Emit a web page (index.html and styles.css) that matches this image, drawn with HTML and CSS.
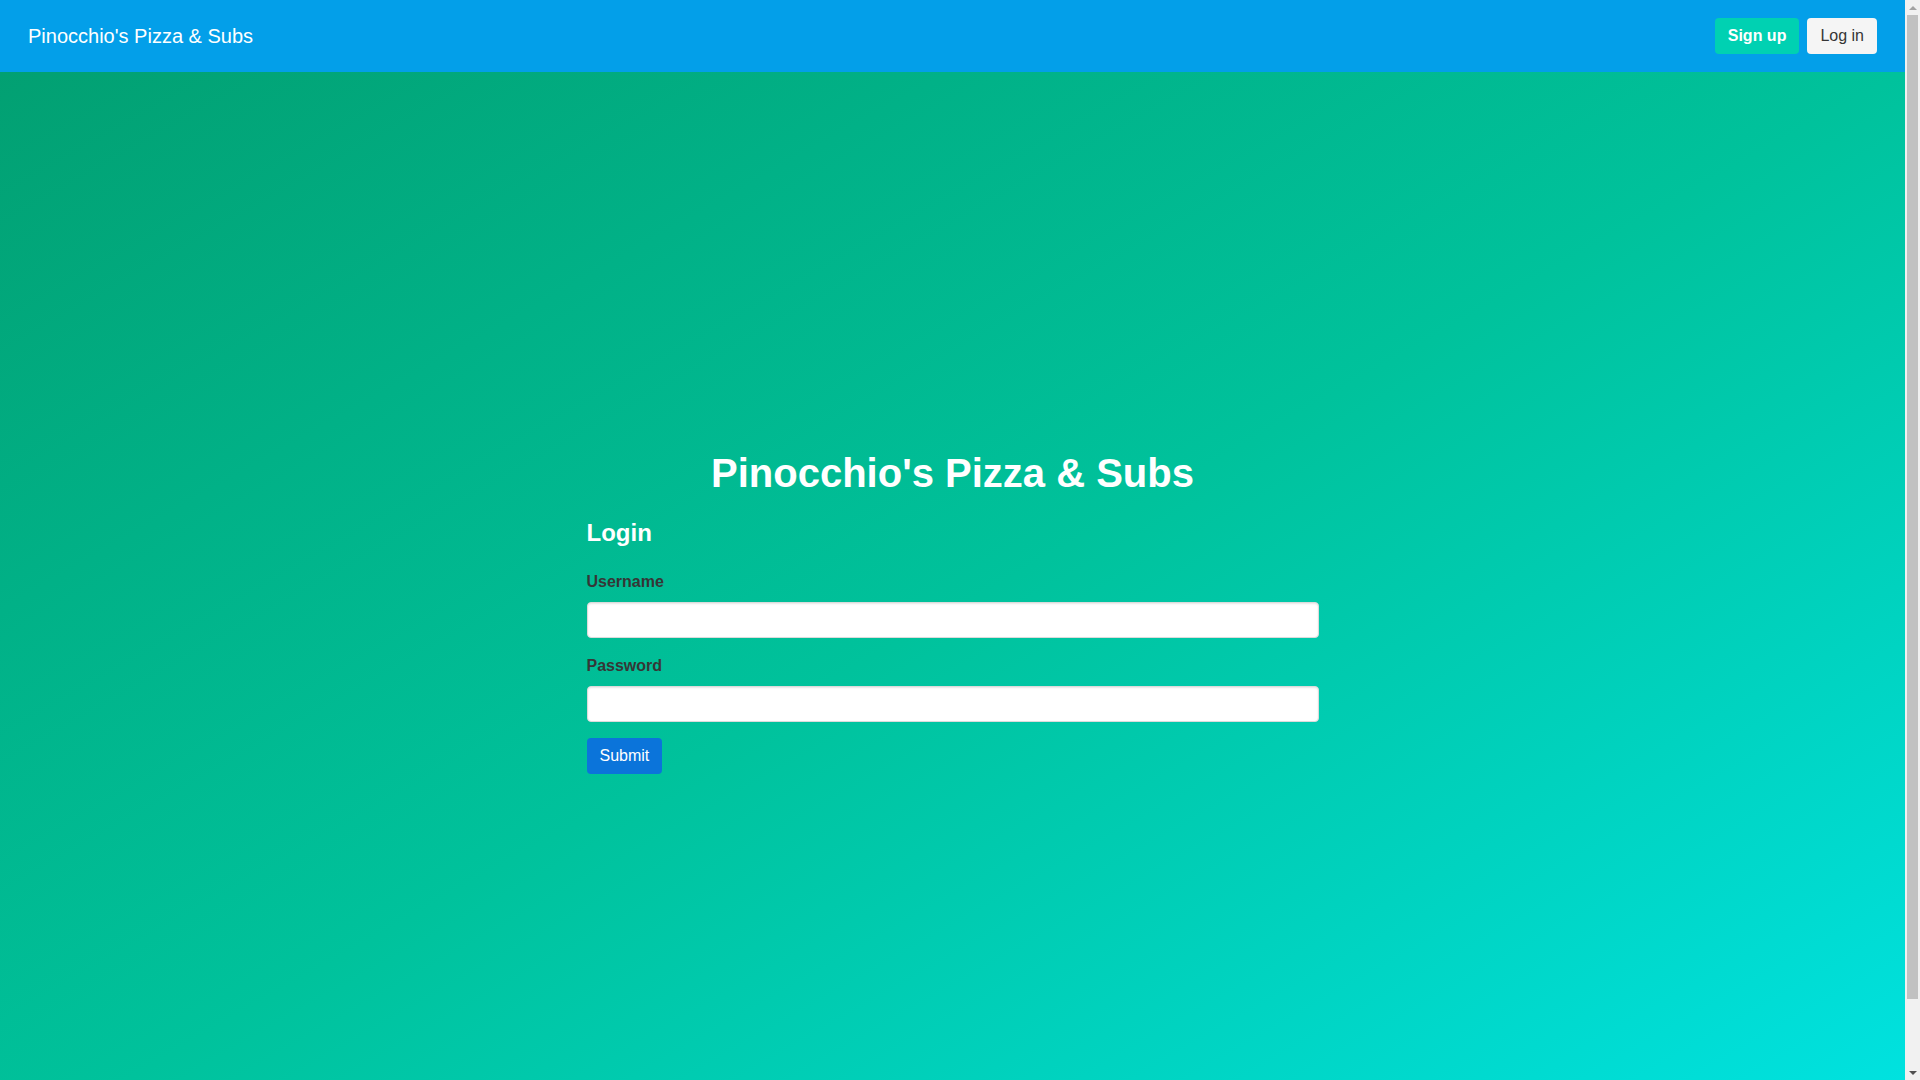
FILE: index.html
```html
<!DOCTYPE html>
<html lang="en">
<head>
<meta charset="utf-8">
<title>Pinocchio's Pizza &amp; Subs</title>
<link rel="stylesheet" href="styles.css">
</head>
<body>
<nav class="navbar">
  <a class="brand" href="#">Pinocchio's Pizza &amp; Subs</a>
  <div class="nav-buttons">
    <a class="btn btn-primary" href="#">Sign up</a>
    <a class="btn btn-light" href="#">Log in</a>
  </div>
</nav>
<section class="hero">
  <div class="hero-body">
    <h1 class="title">Pinocchio's Pizza &amp; Subs</h1>
    <form class="login-form">
      <h2 class="subtitle">Login</h2>
      <div class="field">
        <label class="label" for="username">Username</label>
        <input class="input" id="username" type="text">
      </div>
      <div class="field">
        <label class="label" for="password">Password</label>
        <input class="input" id="password" type="password">
      </div>
      <button class="btn btn-link" type="submit">Submit</button>
    </form>
  </div>
</section>
<div class="scrollbar" aria-hidden="true">
  <div class="sb-arrow sb-up"></div>
  <div class="sb-thumb"></div>
  <div class="sb-track"></div>
  <div class="sb-arrow sb-down"></div>
</div>
</body>
</html>
```
FILE: styles.css
```css
* { box-sizing: border-box; }

html, body {
  margin: 0;
  padding: 0;
}

html {
  scrollbar-width: none;
}

body {
  font-family: "Liberation Sans", Arial, sans-serif;
  font-size: 16px;
  color: #363636;
  padding-right: 15px;
}

.navbar {
  height: 72px;
  background: #039fe9;
  display: flex;
  align-items: center;
  justify-content: space-between;
  padding: 0 28px;
}

.brand {
  color: #ffffff;
  font-size: 20px;
  text-decoration: none;
}

.nav-buttons {
  display: flex;
  gap: 8px;
}

.btn {
  display: inline-block;
  font-family: "Liberation Sans", Arial, sans-serif;
  font-size: 16px;
  line-height: 20px;
  padding: 7px 12px;
  border: 1px solid transparent;
  border-radius: 4px;
  text-decoration: none;
  cursor: pointer;
}

.btn-primary {
  background: #00d1b2;
  color: #ffffff;
  font-weight: bold;
}

.btn-light {
  background: #f5f5f5;
  color: #363636;
}

.btn-link {
  background: #0b74da;
  color: #ffffff;
  margin-top: 16px;
}

.hero {
  min-height: 100vh;
  background: linear-gradient(to bottom right, #02a072 0%, #00c29c 50%, #00e4e4 100%);
  display: flex;
  flex-direction: column;
  justify-content: center;
}

.hero-body {
  width: 732px;
  margin: 0 auto;
}

.title {
  margin: 0 0 23px;
  font-size: 40px;
  font-weight: bold;
  line-height: normal;
  color: #ffffff;
  text-align: center;
}

.login-form {
  margin: 0;
}

.subtitle {
  margin: 0 0 26px;
  font-size: 24px;
  font-weight: bold;
  line-height: normal;
  color: #ffffff;
}

.field {
  margin-bottom: 19px;
}

.field:last-of-type {
  margin-bottom: 0;
}

.label {
  display: block;
  font-weight: bold;
  font-size: 16px;
  line-height: normal;
  color: #363636;
  margin-bottom: 11px;
}

.input {
  display: block;
  width: 100%;
  height: 36px;
  background: #ffffff;
  border: 1px solid #dbdbdb;
  border-radius: 4px;
  box-shadow: inset 0 1px 2px rgba(10, 10, 10, 0.1);
  font-family: "Liberation Sans", Arial, sans-serif;
  font-size: 16px;
  padding: 0 10px;
  color: #363636;
}

/* Imitation of the browser's classic vertical scrollbar */
.scrollbar {
  position: fixed;
  top: 0;
  right: 0;
  width: 15px;
  height: 100vh;
  background: #f1f1f1;
  display: flex;
  flex-direction: column;
  align-items: center;
}

.sb-arrow {
  width: 15px;
  height: 15px;
  flex: none;
  display: flex;
  align-items: center;
  justify-content: center;
}

.sb-arrow::before {
  content: "";
  width: 0;
  height: 0;
  border-left: 4px solid transparent;
  border-right: 4px solid transparent;
}

.sb-up::before {
  border-bottom: 4px solid #a3a3a3;
}

.sb-down::before {
  border-top: 4px solid #505050;
}

.sb-thumb {
  width: 11px;
  height: 984px;
  flex: none;
  background: #c1c1c1;
}

.sb-track {
  flex: 1;
}
```
